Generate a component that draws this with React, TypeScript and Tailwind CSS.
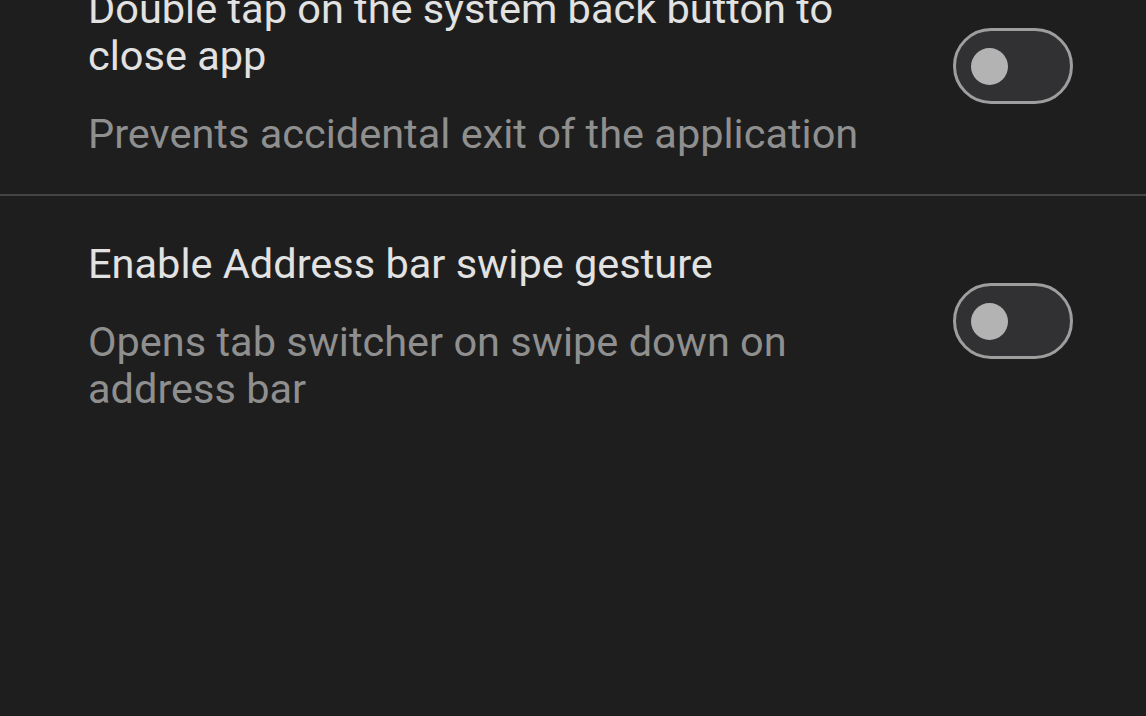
import React, { useState } from "react";

type Setting = {
  id: string;
  title: string;
  description: string;
};

const settings: Setting[] = [
  {
    id: "double-back",
    title: "Double tap on the system back button to close app",
    description: "Prevents accidental exit of the application",
  },
  {
    id: "address-swipe",
    title: "Enable Address bar swipe gesture",
    description: "Opens tab switcher on swipe down on address bar",
  },
];

const Toggle = ({ on, onChange }: { on: boolean; onChange: () => void }) => (
  <button
    type="button"
    onClick={onChange}
    className={`mt-[43px] flex h-[76px] w-[120px] shrink-0 items-center rounded-full border-[3px] border-[#9e9e9e] bg-[#313134] ${
      on ? "justify-end" : "justify-start"
    }`}
  >
    <span className="mx-[15px] block h-[37px] w-[37px] rounded-full bg-[#b3b3b3]" />
  </button>
);

export default function App() {
  const [values, setValues] = useState<Record<string, boolean>>({});

  return (
    <div
      className="h-screen w-full overflow-hidden bg-[#1e1e1e]"
      style={{ fontFamily: "Roboto, 'Noto Sans', sans-serif" }}
    >
      <div className="-mt-[59px] flex flex-col">
        {settings.map((s, i) => (
          <div key={s.id}>
            {/* 설정 항목 */}
            <div className="flex items-start pl-[88px] pr-[73px] pt-[44px] pb-[37px]">
              <div className="mr-[75px] flex-1">
                <div className="text-[41.5px] leading-[47px] text-[#e2e2e2]">
                  {s.title}
                </div>
                <div className="mt-[31px] text-[41.5px] leading-[47px] text-[#8f8f8f]">
                  {s.description}
                </div>
              </div>
              <Toggle
                on={!!values[s.id]}
                onChange={() =>
                  setValues((prev) => ({ ...prev, [s.id]: !prev[s.id] }))
                }
              />
            </div>
            {i < settings.length - 1 && <div className="h-[2px] bg-[#454545]" />}
          </div>
        ))}
      </div>
    </div>
  );
}
